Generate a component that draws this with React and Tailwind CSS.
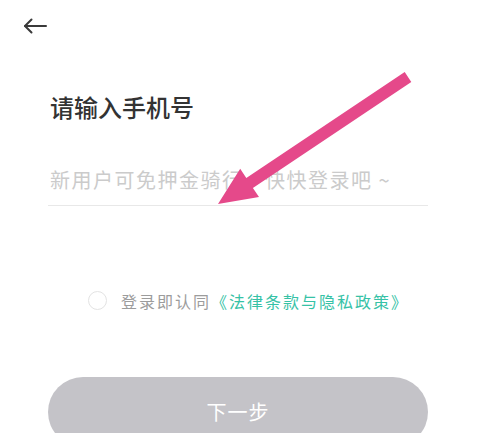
export default function App() {
  return (
    <main
      className="relative h-[433px] w-[501px] overflow-hidden bg-white"
      style={{ fontFamily: '"Noto Sans CJK SC", "Noto Sans", sans-serif' }}
    >
      <div className="pl-[23px] pt-[18px]">
        <svg width="24" height="16" viewBox="0 0 24 16" fill="none" stroke="#3a3a3a" strokeWidth="2" strokeLinecap="round" strokeLinejoin="round">
          <path d="M2 8H23" />
          <path d="M8.5 1.5 2 8l6.5 6.5" />
        </svg>
      </div>

      <div className="ml-[48px] w-[380px]">
        <h1 className="mt-[61px] pl-[2px] text-[24px] leading-[24px] font-medium text-[#333]">请输入手机号</h1>

        <div className="mt-[50px] border-b border-[#e8e8e8] pb-[14px] pl-[2px] text-[20px] leading-[22px] tracking-[1.5px] text-[#cbcbcb]">
          新用户可免押金骑行，快快登录吧 ~
        </div>

        <div className="mt-[85px] flex items-center pl-[40px]">
          <span className="h-[19px] w-[19px] rounded-full border border-[#e3e3e3]" />
          <p className="ml-[14px] text-[16px] leading-[18px] tracking-[2px] text-[#9c9c9c]">
            登录即认同<span className="text-[#36c2a6]">《法律条款与隐私政策》</span>
          </p>
        </div>

        <button className="mt-[67px] flex h-[70px] w-[380px] items-center justify-center rounded-full bg-[#c4c3c8] pb-[1px] text-[20px] tracking-[1px] text-white">
          下一步
        </button>
      </div>

      <svg className="absolute left-0 top-0" width="501" height="433" viewBox="0 0 501 433">
        <polygon
          fill="#e5498a"
          points="404.7,72 246.3,177.9 240.2,168.8 218,204 259,197 252.9,187.9 411.3,82"
        />
      </svg>
    </main>
  )
}
